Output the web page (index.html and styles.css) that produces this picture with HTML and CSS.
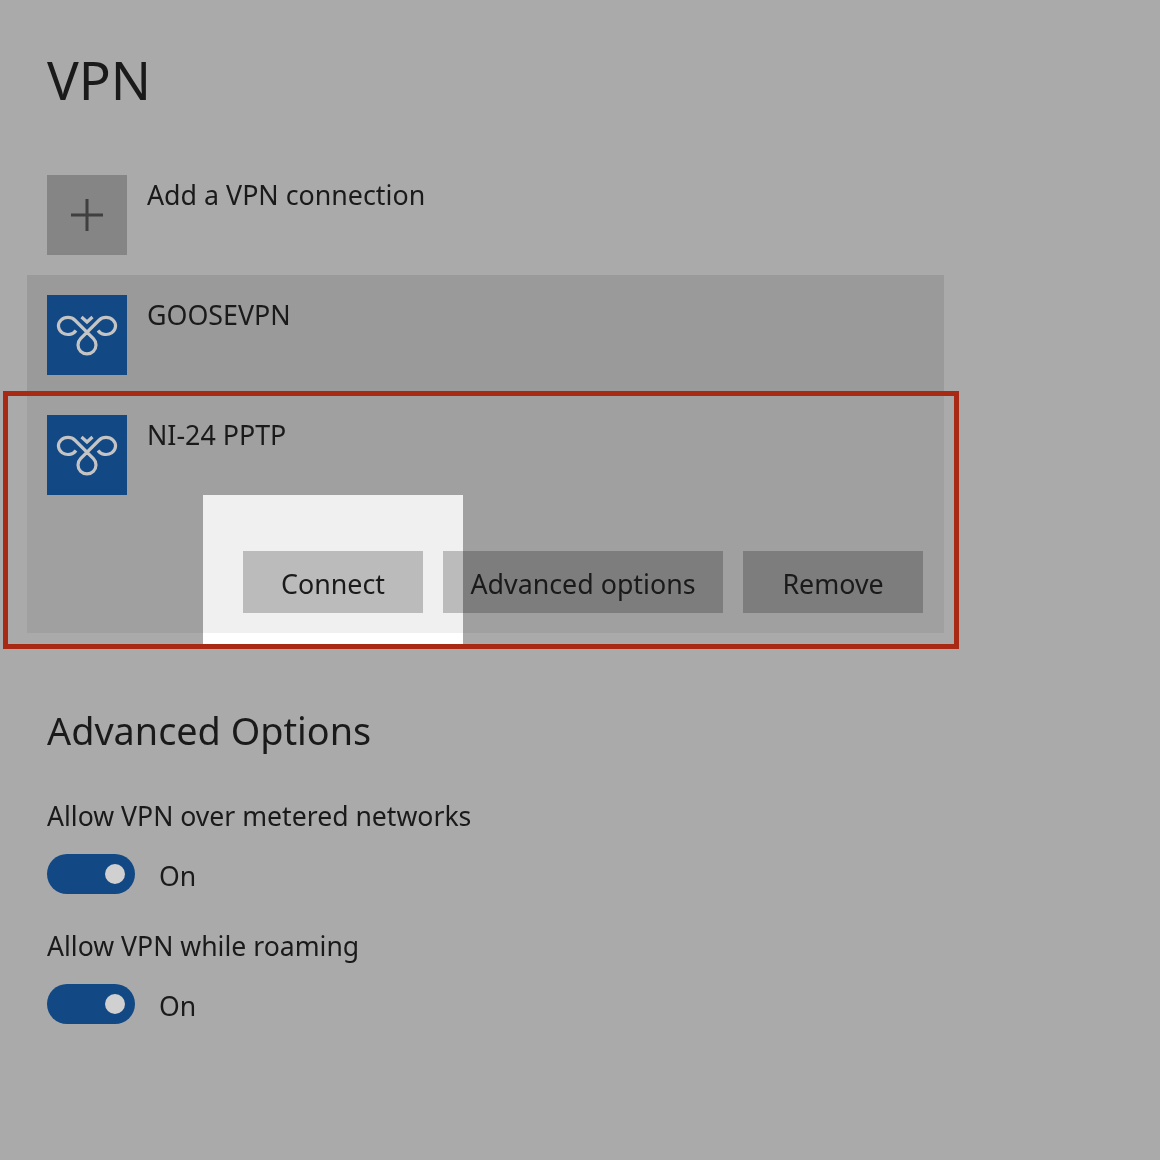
FILE: index.html
```html
<!DOCTYPE html>
<html lang="en">
<head>
<meta charset="utf-8">
<title>VPN</title>
<link rel="stylesheet" href="styles.css">
</head>
<body>
<main class="page">
  <h1 class="title">VPN</h1>
  <div class="add-row">
    <div class="tile tile-add">
      <svg width="80" height="80" viewBox="0 0 80 80"><path d="M40 24V56M24 40H56" fill="none" stroke="#3f3f3f" stroke-width="3"/></svg>
    </div>
    <div class="row-label">Add a VPN connection</div>
  </div>
  <section class="list">
    <div class="item item-plain">
      <div class="item-head">
        <div class="tile tile-blue">
          <svg width="80" height="80" viewBox="0 0 80 80"><path class="logo" d="M29 35.5A9.5 8.5 0 1 1 28 25.25L46.4 43.6A9 9 0 1 1 33.6 43.6L52 25.25A9.5 8.5 0 1 1 51 35.5M34.5 22L40 27L45.5 22"/></svg>
        </div>
        <div class="row-label">GOOSEVPN</div>
      </div>
    </div>
    <div class="item item-open">
      <div class="item-head">
        <div class="tile tile-blue">
          <svg width="80" height="80" viewBox="0 0 80 80"><path class="logo" d="M29 35.5A9.5 8.5 0 1 1 28 25.25L46.4 43.6A9 9 0 1 1 33.6 43.6L52 25.25A9.5 8.5 0 1 1 51 35.5M34.5 22L40 27L45.5 22"/></svg>
        </div>
        <div class="row-label">NI-24 PPTP</div>
      </div>
      <div class="actions">
        <button class="btn btn-connect">Connect</button>
        <button class="btn btn-advanced">Advanced options</button>
        <button class="btn btn-remove">Remove</button>
      </div>
      <div class="spotlight"><div class="spotlight-foot"></div></div>
      <div class="callout"></div>
    </div>
  </section>
  <h2 class="subtitle">Advanced Options</h2>
  <div class="option">
    <div class="option-label">Allow VPN over metered networks</div>
    <div class="toggle-row"><span class="toggle"><span class="knob"></span></span><span class="toggle-text">On</span></div>
  </div>
  <div class="option">
    <div class="option-label">Allow VPN while roaming</div>
    <div class="toggle-row"><span class="toggle"><span class="knob"></span></span><span class="toggle-text">On</span></div>
  </div>
</main>
</body>
</html>
```
FILE: styles.css
```css
* { box-sizing: border-box; }
html, body { margin: 0; height: 100%; background: #aaaaaa; }
body { font-family: "Noto Sans", "Open Sans", sans-serif; color: #1a1a1a; }
.page { width: 1160px; height: 1160px; padding: 0 0 0 47px; overflow: hidden; filter: blur(0.5px); }
.title { margin: 0; padding-top: 44px; height: 175px; font-weight: 400; font-size: 53px; line-height: 72px; }
.add-row { display: flex; gap: 20px; height: 100px; }
.tile { width: 80px; height: 80px; flex: none; }
.tile svg { display: block; }
.tile-add { background: #858585; }
.tile-blue { background: #124884; }
.logo { fill: none; stroke: #c4c4c4; stroke-width: 3.2; }
.row-label { font-size: 26.8px; line-height: 40px; }
.list { margin-left: -20px; width: 917px; }
.item { padding: 20px 21px 0 20px; }
.item-plain { height: 120px; background: #9a9a9a; }
.item-open { height: 238px; background: #a0a0a0; position: relative; }
.item-head { display: flex; gap: 20px; height: 80px; }
.actions { display: flex; justify-content: flex-end; gap: 20px; margin-top: 56px; position: relative; z-index: 2; }
.btn { height: 62px; border: 0; padding: 2px 0 0; background: #7d7d7d; color: #1a1a1a; font: inherit; font-size: 26.8px; }
.btn-connect { width: 180px; background: #bbbbbb; }
.btn-advanced { width: 280px; background: linear-gradient(to right, #bbbbbb 20px, #7d7d7d 20px); }
.btn-remove { width: 180px; }
.spotlight { position: absolute; left: 176px; top: 100px; width: 260px; height: 149px; background: #f0f0f0; z-index: 1; }
.spotlight-foot { position: absolute; left: 0; right: 0; top: 138px; height: 11px; background: #ffffff; }
.callout { position: absolute; left: -24px; top: -4px; width: 956px; height: 258px; border: 5px solid #a82914; z-index: 3; pointer-events: none; }
.subtitle { margin: 0; padding-top: 73px; height: 164px; font-weight: 400; font-size: 37.8px; line-height: 50px; }
.option { height: 130px; }
.option-label { font-size: 26.6px; line-height: 38px; }
.toggle-row { display: flex; align-items: center; gap: 24px; margin-top: 19px; height: 40px; }
.toggle { display: block; width: 88px; height: 40px; border-radius: 20px; background: #124884; position: relative; }
.knob { position: absolute; left: 58px; top: 10px; width: 20px; height: 20px; border-radius: 50%; background: #d0d0d0; }
.toggle-text { font-size: 26.6px; line-height: 40px; position: relative; top: 2px; }
```
